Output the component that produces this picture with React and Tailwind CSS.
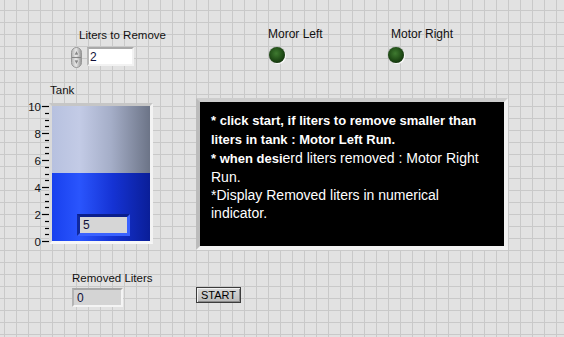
import React from 'react';

const font = { fontFamily: '"Liberation Sans", Arial, sans-serif' };

function Scale() {
  const ticks = [];
  for (let i = 0; i <= 20; i++) {
    const y = Math.round(8 + i * 6.75) + 0.5;
    const major = i % 4 === 0;
    ticks.push(<line key={i} x1={major ? 14 : 17} x2={21} y1={y} y2={y} stroke="#000" strokeWidth="1.2" />);
    if (major) {
      ticks.push(
        <text key={'t' + i} x="13" y={y + 4} textAnchor="end" fontSize="11.5" fill="#111" style={font}>
          {10 - i / 2}
        </text>
      );
    }
  }
  return (
    <svg width="21" height="153" className="block shrink-0 -mt-[5px]">
      {ticks}
    </svg>
  );
}

function Led() {
  return (
    <div className="w-[16px] h-[16px] rounded-full bg-[radial-gradient(circle_at_45%_40%,#3f7a30_0%,#24521a_45%,#10300a_80%,#0a1f06_100%)] shadow-[1px_1px_1px_#ffffff,0_0_1px_#555]" />
  );
}

function Spinner() {
  return (
    <svg width="11" height="21" className="block shrink-0">
      <defs>
        <linearGradient id="sp" x1="0" x2="1" y1="0" y2="0">
          <stop offset="0" stopColor="#b4b4b4" />
          <stop offset="0.45" stopColor="#e6e6e6" />
          <stop offset="1" stopColor="#939393" />
        </linearGradient>
      </defs>
      <rect x="0.5" y="0.5" width="10" height="20" rx="5" fill="url(#sp)" stroke="#969696" />
      <line x1="1" x2="10" y1="10.5" y2="10.5" stroke="#858585" />
      <path d="M5.5 3.5 L8 8 L3 8 Z" fill="#868686" stroke="#f4f4f4" strokeWidth="0.6" />
      <path d="M5.5 17.5 L8 13 L3 13 Z" fill="#868686" stroke="#f4f4f4" strokeWidth="0.6" />
    </svg>
  );
}

export default function App() {
  return (
    <div
      className="w-[564px] h-[337px] overflow-hidden bg-[#e2e2e2] bg-[linear-gradient(to_right,#c9c9c9_1px,transparent_1px),linear-gradient(to_bottom,#c9c9c9_1px,transparent_1px)] bg-[size:12px_12px] bg-[position:4px_10px] text-[#111] pt-[27px]"
      style={font}
    >
      {/* top row */}
      <div className="flex items-start h-[41px]">
        <div className="ml-[71px] w-[63px] flex flex-col">
          <span className="ml-[8px] mt-[1px] h-[14px] leading-[14px] text-[11.5px] whitespace-nowrap">Liters to Remove</span>
          <div className="mt-[5px] flex items-start">
            <Spinner />
            <div className="ml-[5px] w-[48px] h-[19px] bg-white border-2 border-t-[#a9a9a9] border-l-[#b8b8b8] border-r-[#f2f2f2] border-b-[#f2f2f2] flex items-center pl-[1px] text-[12px] text-[#10103a]">
              2
            </div>
          </div>
        </div>
        <div className="ml-[133px] w-[60px] flex flex-col">
          <span className="ml-[1px] h-[14px] leading-[14px] text-[12px] whitespace-nowrap">Moror Left</span>
          <div className="mt-[6px] ml-[2px]">
            <Led />
          </div>
        </div>
        <div className="ml-[61px] w-[70px] flex flex-col">
          <span className="ml-[3px] h-[14px] leading-[14px] text-[12px] whitespace-nowrap">Motor Right</span>
          <div className="mt-[6px]">
            <Led />
          </div>
        </div>
      </div>

      {/* middle row */}
      <div className="mt-[15px] flex items-start">
        <div className="ml-[28px] flex flex-col">
          <span className="ml-[22px] h-[14px] leading-[14px] text-[11.5px]">Tank</span>
          <div className="mt-[6px] flex items-start">
            <Scale />
            <div className="w-[104px] h-[141px] border-[3px] border-t-[#c6c6c6] border-l-[#dadada] border-r-[#f3f3f3] border-b-[#f7f7f7] flex flex-col relative">
              <div className="flex-1 bg-[linear-gradient(to_right,#b7c1df_0%,#c3cbe6_28%,#a5aec8_60%,#6c7487_100%)]" />
              <div className="h-[68px] bg-[linear-gradient(to_right,#1840ee_0%,#2a55fd_28%,#1533d4_62%,#0a1e98_100%)]" />
              <div className="absolute left-[25px] top-[108px] w-[53px] h-[22px] border-[3px] border-t-[#0b1f8c] border-l-[#10299e] border-r-[#3a62ff] border-b-[#3a62ff] bg-[#d6d6d6] flex items-center pl-[3px] text-[12px] text-[#10103a]">
                5
              </div>
            </div>
          </div>
        </div>
        <div className="ml-[43px] mt-[15px] w-[312px] h-[152px] border-4 border-t-[#cdcdcd] border-l-[#bcbcbc] border-r-[#f1f1f1] border-b-[#f3f3f3] bg-black">
          <p className="pt-[9px] pl-[11px] w-[289px] leading-[18px] text-[14px] text-white">
            <b className="text-[13px]">* click start, if liters to remove smaller than liters in tank : Motor Left Run.</b>
            <br />
            <b className="text-[13px]">* when desi</b>erd liters removed : Motor Right Run.
            <br />
            *Display Removed liters in numerical indicator.
          </p>
        </div>
      </div>

      {/* bottom row */}
      <div className="mt-[20px] flex items-start">
        <div className="ml-[72px] w-[80px] flex flex-col">
          <span className="h-[14px] leading-[14px] text-[11.5px] whitespace-nowrap">Removed Liters</span>
          <div className="mt-[3px] w-[51px] h-[19px] border-2 border-t-[#a8a8a8] border-l-[#b4b4b4] border-r-[#f4f4f4] border-b-[#f4f4f4] bg-[#d4d4d4] flex items-center pl-[3px] text-[12px] text-[#10103a]">
            0
          </div>
        </div>
        <button className="ml-[44px] mt-[16px] w-[45px] h-[16px] border border-[#3c3c3c] bg-[linear-gradient(to_bottom,#dadada,#b9b9b9)] shadow-[inset_1px_1px_0_#f2f2f2,inset_-1px_-1px_0_#8a8a8a] text-[11px] leading-[14px] text-black flex items-center justify-center">
          START
        </button>
      </div>
    </div>
  );
}
